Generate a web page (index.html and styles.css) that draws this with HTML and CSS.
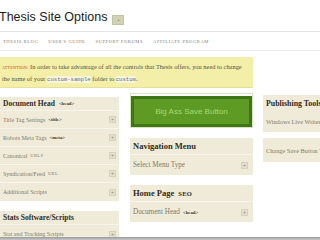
FILE: index.html
```html
<!DOCTYPE html>
<html>
<head>
<meta charset="utf-8">
<link rel="stylesheet" href="styles.css">
</head>
<body>
<div class="page">
  <div class="top">
    <h1 class="title">Thesis Site Options</h1>
    <span class="tbtn">▲</span>
  </div>
  <nav class="nav">
    <span>Thesis Blog</span>
    <span>User's Guide</span>
    <span>Support Forums</span>
    <span>Affiliate Program</span>
  </nav>
  <div class="attn">
    <span class="attn-label">Attention:</span> In order to take advantage of all the controls that Thesis offers, you need to change the name of your <code>custom-sample</code> folder to <code>custom</code>.
  </div>
  <div class="cols">
    <div class="col col-left">
      <div class="panel">
        <div class="ph">Document Head <span class="tag">&lt;head&gt;</span></div>
        <div class="row">Title Tag Settings <span class="tag">&lt;title&gt;</span><span class="plus">+</span></div>
        <div class="row">Robots Meta Tags <span class="tag">&lt;meta&gt;</span><span class="plus">+</span></div>
        <div class="row">Canonical <span class="sc">URLs</span><span class="plus">+</span></div>
        <div class="row">Syndication/Feed <span class="sc">URL</span><span class="plus">+</span></div>
        <div class="row">Additional Scripts<span class="plus">+</span></div>
      </div>
      <div class="panel">
        <div class="ph">Stats Software/Scripts</div>
        <div class="row">Stat and Tracking Scripts<span class="plus">+</span></div>
      </div>
    </div>
    <div class="col col-mid">
      <div class="savewrap"><div class="save">Big Ass Save Button</div></div>
      <div class="panel mp">
        <div class="ph">Navigation Menu</div>
        <div class="row">Select Menu Type<span class="plus">+</span></div>
      </div>
      <div class="panel mp mp2">
        <div class="ph">Home Page <span class="sc">SEO</span></div>
        <div class="row">Document Head <span class="tag">&lt;head&gt;</span><span class="plus">+</span></div>
      </div>
    </div>
    <div class="col col-right">
      <div class="panel rp">
        <div class="ph">Publishing Tools</div>
        <div class="row">Windows Live Writer</div>
      </div>
      <div class="panel rp rp2">
        <div class="row">Change Save Button Text</div>
      </div>
    </div>
  </div>
</div>
<div class="playerbar"></div>
</body>
</html>
```

FILE: styles.css
```css
html, body {
  margin: 0;
  padding: 0;
  background: #ffffff;
}
body {
  width: 320px;
  height: 240px;
  overflow: hidden;
  font-family: "Liberation Serif", serif;
}
.page {
  width: 320px;
  overflow: hidden;
}
.top {
  display: flex;
  align-items: center;
  height: 31px;
  gap: 5px;
}
.title {
  margin: 0 0 0 -1px;
  font-family: "Liberation Sans", Arial, sans-serif;
  font-weight: normal;
  font-size: 12.5px;
  color: #1c1c1c;
  line-height: 1;
  padding-top: 4px;
}
.tbtn {
  width: 12px;
  height: 10px;
  margin-top: 9px;
  background: #d2d1b2;
  border: 1px solid #c3c2a2;
  box-sizing: border-box;
  font-size: 3px;
  color: #8b8a6a;
  display: flex;
  align-items: center;
  justify-content: center;
}
.nav {
  display: flex;
  align-items: center;
  height: 18px;
  border-top: 1px solid #e4e4e4;
  border-bottom: 1px solid #ececec;
  padding-left: 3px;
  gap: 10px;
}
.nav span {
  font-size: 4.6px;
  text-transform: uppercase;
  letter-spacing: 0.55px;
  color: #808080;
}
.attn {
  margin-top: 6px;
  width: 249px;
  height: 22px;
  padding: 4px 2px 4px 2px;
  background: #f3efa8;
  border-bottom: 1px solid #e6e09a;
  font-size: 6.4px;
  line-height: 11px;
  color: #55544a;
}
.attn-label {
  color: #c8401a;
  text-transform: uppercase;
  font-size: 4.2px;
  letter-spacing: 0.2px;
}
.attn code {
  font-family: "Liberation Mono", monospace;
  font-size: 5.6px;
  color: #5a6a90;
  background: #f8f6d8;
}
.cols {
  display: grid;
  grid-template-columns: 119px 123px 57px;
  column-gap: 11px;
  margin-top: 5px;
}
.col-right {
  margin-left: -1px;
  width: 70px;
  overflow: hidden;
}
.panel {
  background: #efebd8;
}
.col-left .panel {
  margin-top: 4px;
}
.col-left .panel + .panel {
  margin-top: 10px;
}
.ph {
  height: 14px;
  display: flex;
  align-items: center;
  gap: 4px;
  padding: 0 3px;
  font-weight: bold;
  font-size: 7.5px;
  color: #2e2d26;
  border-bottom: 1px solid #f8f6ec;
  box-sizing: border-box;
  white-space: nowrap;
}
.row {
  height: 18px;
  display: flex;
  align-items: center;
  gap: 3px;
  padding: 0 3px;
  font-size: 6px;
  color: #7d7b68;
  border-bottom: 1px solid #f8f6ec;
  box-sizing: border-box;
  white-space: nowrap;
}
.row:last-child {
  border-bottom: none;
}
.tag {
  font-weight: bold;
  font-size: 4.8px;
  color: #3a392f;
}
.sc {
  font-size: 4.6px;
  text-transform: uppercase;
  letter-spacing: 0.3px;
}
.ph .sc {
  font-size: 6.5px;
}
.plus {
  margin-left: auto;
  width: 7px;
  height: 7px;
  box-sizing: border-box;
  background: #e2dfcb;
  border: 1px solid #d6d2bb;
  font-family: "Liberation Sans", sans-serif;
  font-size: 5px;
  line-height: 5px;
  text-align: center;
  color: #8f8c78;
}
.savewrap {
  border: 1px solid #d6e5bd;
  padding: 2px 0 0 0;
  box-sizing: border-box;
  height: 35px;
}
.save {
  height: 31px;
  box-sizing: border-box;
  background: #5d9b24;
  border: 3px solid #3e7516;
  display: flex;
  align-items: center;
  justify-content: center;
  font-family: "Liberation Sans", Arial, sans-serif;
  font-size: 8px;
  color: #acd873;
}
.mp {
  margin-top: 10px;
}
.mp .ph {
  height: 17px;
  font-size: 8.5px;
}
.mp .row {
  height: 20px;
  font-size: 7.2px;
}
.mp .plus {
  margin-right: 2px;
}
.mp2 {
  margin-top: 10px;
}
.rp {
  margin-top: 2px;
}
.rp .ph {
  height: 16px;
  font-size: 7.9px;
  border-bottom: none;
}
.rp .row {
  height: 21px;
  font-size: 6.3px;
}
.rp2 {
  margin-top: 6px;
}
.rp2 .row {
  height: 24px;
}
.playerbar {
  position: fixed;
  left: 0;
  right: 0;
  bottom: 0;
  height: 3px;
  background: linear-gradient(#9a9a9a, #c8c8c8);
}
```
